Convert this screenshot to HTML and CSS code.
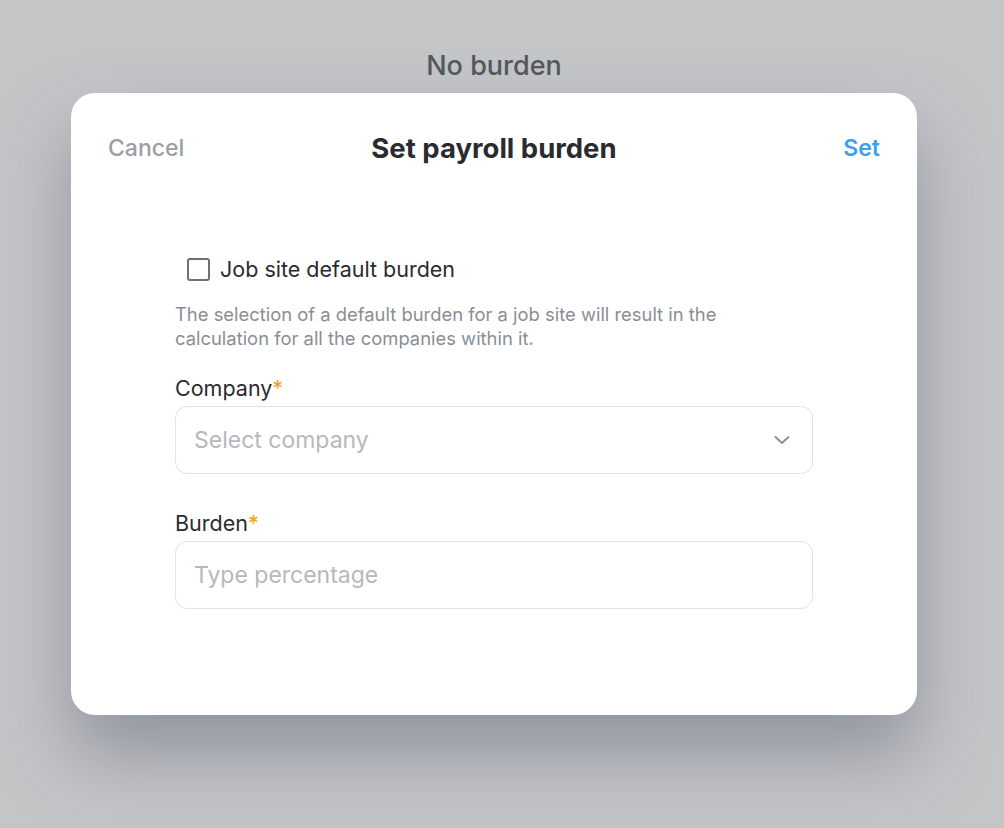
FILE: index.html
```html
<!DOCTYPE html>
<html lang="en">
<head>
    <meta charset="UTF-8">
    <meta name="viewport" content="width=device-width, initial-scale=1.0">
    <title>Set payroll burden</title>
    <link rel="stylesheet" href="styles.css">
</head>
<body>

    <div class="page">
        <div class="backdrop-title">No burden</div>

        <div class="modal">
            <div class="modal-header">
                <span class="header-btn cancel">Cancel</span>
                <h2 class="modal-title">Set payroll burden</h2>
                <span class="header-btn set">Set</span>
            </div>

            <div class="modal-body">
                <label class="check-row">
                    <span class="checkbox"></span>
                    <span>Job site default burden</span>
                </label>
                <p class="hint">The selection of a default burden for a job site will result in the calculation for all the companies within it.</p>

                <div class="field">
                    <div class="field-label">Company<span class="req">*</span></div>
                    <div class="input select">
                        <span class="placeholder">Select company</span>
                        <svg class="chevron" width="20" height="20" viewBox="0 0 20 20" fill="none">
                            <path d="M3.5 7 L10 13 L16.5 7" stroke="#8d9096" stroke-width="2" stroke-linecap="round" stroke-linejoin="round"/>
                        </svg>
                    </div>
                </div>

                <div class="field">
                    <div class="field-label">Burden<span class="req">*</span></div>
                    <div class="input">
                        <span class="placeholder">Type percentage</span>
                    </div>
                </div>
            </div>
        </div>
    </div>

</body>
</html>
```

FILE: styles.css
```css
body {
    margin: 0;
    font-family: 'Inter', 'Noto Sans', sans-serif;
    background-color: #c4c5c7;
    height: 828px;
    overflow: hidden;
}

.page {
    width: 846px;
    margin-left: 71px;
}

.backdrop-title {
    text-align: center;
    font-size: 27px;
    font-weight: 500;
    color: #54575d;
    padding-top: 49px;
    height: 44px;
    line-height: 34px;
}

.modal {
    width: 846px;
    height: 622px;
    background-color: #ffffff;
    border-radius: 24px;
    box-shadow: 0 40px 70px rgba(110, 118, 132, 0.6);
    box-sizing: border-box;
}

.modal-header {
    display: flex;
    align-items: center;
    justify-content: space-between;
    padding: 40px 37px 0 37px;
    height: 30px;
}

.header-btn {
    font-size: 23px;
    font-weight: 500;
    width: 120px;
}

.cancel {
    color: #9c9ea3;
}

.set {
    color: #3aa1f2;
    font-weight: 600;
    text-align: right;
}

.modal-title {
    margin: 0;
    font-size: 27.5px;
    font-weight: 700;
    color: #2a2b2f;
}

.modal-body {
    padding: 0 104px;
    margin-top: 92px;
}

.check-row {
    display: flex;
    align-items: center;
    gap: 10px;
    padding-left: 12px;
    font-size: 21.5px;
    color: #2a2b2f;
    height: 28px;
}

.checkbox {
    width: 19px;
    height: 19px;
    border: 2px solid #6c7078;
    border-radius: 3px;
}

.hint {
    margin: 19px 0 0 0;
    font-size: 18.4px;
    line-height: 24px;
    color: #8b8e95;
    width: 590px;
}

.field {
    margin-top: 23px;
}

.field + .field {
    margin-top: 34px;
}

.field-label {
    font-size: 21.5px;
    color: #2a2b2f;
    height: 33px;
    line-height: 30px;
}

.req {
    color: #f5a016;
}

.input {
    display: flex;
    align-items: center;
    justify-content: space-between;
    height: 68px;
    box-sizing: border-box;
    border: 1.5px solid #dce4ee;
    border-radius: 12px;
    padding: 0 20px 0 18px;
}

.placeholder {
    font-size: 23px;
    color: #b6b8bc;
}
```
